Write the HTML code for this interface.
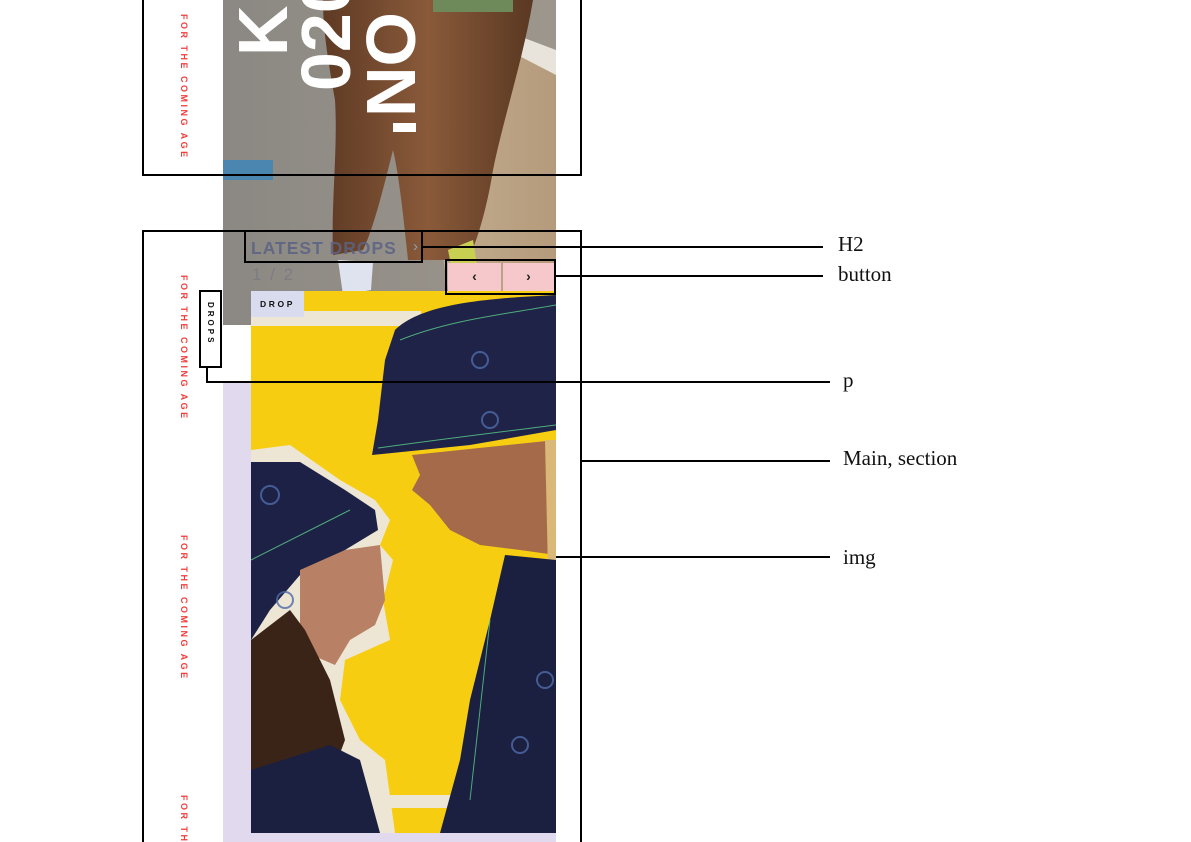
<!DOCTYPE html>
<html style="width:1191px;height:842px;overflow:hidden"><head><meta charset="utf-8"><style>
*{margin:0;padding:0;box-sizing:border-box}
body{width:1191px;height:842px;background:#fff;position:relative;overflow:hidden;font-family:"Liberation Sans",sans-serif}
#w{position:absolute;left:0;top:0;width:1191px;height:842px;overflow:hidden}
.a{position:absolute}
.red{position:absolute;left:179px;width:10px;writing-mode:vertical-rl;color:#f23b3b;font-weight:bold;font-size:9px;letter-spacing:2.5px;white-space:nowrap;line-height:10px}
.big{position:absolute;transform:rotate(-90deg);transform-origin:0 0;color:#fff;font-weight:bold;font-size:70px;line-height:70px;white-space:nowrap}
.lbl{position:absolute;font-family:"Liberation Serif",serif;font-size:21px;color:#111;line-height:1}
.ln{position:absolute;background:#000;height:2px}
.bx{position:absolute;border:2px solid #000}
</style></head><body><div id="w">

<svg class="a" style="left:223px;top:0" width="333" height="325" viewBox="0 0 333 325">
<defs>
<linearGradient id="pv" x1="0" x2="1"><stop offset="0" stop-color="#8b8883"/><stop offset="1" stop-color="#9d968c"/></linearGradient>
<linearGradient id="tl" x1="0" x2="1"><stop offset="0" stop-color="#c3ad90"/><stop offset="1" stop-color="#b59b7c"/></linearGradient>
<linearGradient id="lg" x1="0" x2="1"><stop offset="0" stop-color="#5e3a24"/><stop offset=".5" stop-color="#8a5a3a"/><stop offset="1" stop-color="#5a3822"/></linearGradient>
</defs>
<rect width="333" height="325" fill="url(#pv)"/>
<polygon points="240,30 333,60 333,325 230,325 200,120" fill="url(#tl)"/>
<polygon points="280,30 333,50 333,75 275,45" fill="#e8e4dc"/>
<polygon points="0,160 50,160 50,180 0,180" fill="#4a86b0"/>
<path d="M100,0 L310,0 C300,60 280,120 270,170 C262,220 250,250 245,260 L185,260 C180,210 175,170 170,150 C160,190 150,230 140,250 L110,255 C108,200 115,150 112,100 C105,60 100,30 100,0Z" fill="url(#lg)"/>
<path d="M115,260 L150,262 L148,290 L120,295Z" fill="#dfe3ef"/>
<path d="M225,250 L250,240 L258,290 L235,300Z" fill="#c7d050"/>
<rect x="210" y="0" width="80" height="12" fill="#6f8a5a"/>
</svg>
<div class="a" style="left:223px;top:325px;width:28px;height:58px;background:#fff"></div>
<div class="a" style="left:223px;top:383px;width:28px;height:459px;background:#e1d9ed"></div>
<div class="a" style="left:251px;top:833px;width:305px;height:9px;background:#e1d9ed"></div>

<div class="big" style="left:356px;top:117px">NO</div>
<div class="a" style="left:393px;top:123px;width:23px;height:9px;background:#fff"></div>
<div class="big" style="left:291px;top:91px">020</div>
<div class="big" style="left:228px;top:56px">K</div>

<svg class="a" style="left:251px;top:291px" width="305" height="542" viewBox="251 291 305 542">
<rect x="251" y="291" width="305" height="542" fill="#f7cd12"/>
<rect x="251" y="311" width="170" height="15" fill="#ede6d4"/>
<rect x="251" y="795" width="200" height="13" fill="#ede6d4"/>
<path d="M251,450 L290,445 L340,480 L375,500 L390,520 L380,545 L393,560 L383,600 L390,640 L345,660 L340,700 L360,740 L385,760 L395,833 L251,833Z" fill="#ede6d4"/>
<path d="M251,462 L300,462 L345,490 L375,510 L378,530 L345,550 L300,575 L270,610 L251,640Z" fill="#1d2146"/>
<path d="M300,570 L345,550 L380,545 L385,600 L375,625 L350,640 L335,665 L300,650Z" fill="#b88064"/>
<path d="M251,640 L290,610 L305,630 L330,680 L345,740 L330,780 L251,790Z" fill="#3a2418"/>
<path d="M251,770 L330,745 L360,760 L380,833 L251,833Z" fill="#1b1f40"/>
<path d="M395,330 C420,305 480,300 520,297 L556,295 L556,430 L470,445 L372,455 L378,420 L385,360Z" fill="#1f2348"/>
<path d="M412,455 L556,440 L556,555 L520,550 L480,545 L450,530 L430,505 L412,490 L420,475Z" fill="#a46a4a"/>
<path d="M545,440 L556,440 L556,580 L548,570Z" fill="#d9b878"/>
<path d="M505,555 L556,560 L556,833 L440,833 L460,760 L470,700 L490,620Z" fill="#1b1f40"/>
<g fill="none" stroke="#4f6aa8" stroke-width="2" opacity=".8"><circle cx="480" cy="360" r="8"/><circle cx="490" cy="420" r="8"/><circle cx="270" cy="495" r="9"/><circle cx="285" cy="600" r="8"/><circle cx="545" cy="680" r="8"/><circle cx="520" cy="745" r="8"/></g>
<g fill="none" stroke="#5bd08a" stroke-width="1" opacity=".8"><path d="M400,340 C450,320 500,315 556,305"/><path d="M378,448 C450,438 500,432 556,425"/><path d="M251,560 L350,510"/><path d="M490,620 L470,800"/></g>
</svg>

<div class="a" style="left:251px;top:238px;font-weight:bold;font-size:17.5px;letter-spacing:1px;color:#5b6384;opacity:.85">LATEST DROPS</div>
<div class="a" style="left:413px;top:238px;font-size:15px;color:#8aa0bd">›</div>
<div class="a" style="left:252px;top:265px;font-size:17px;color:#6d7080;opacity:.5;letter-spacing:2px">1 / 2</div>
<div class="a" style="left:448px;top:263px;width:53px;height:28px;background:#f6c8cb;text-align:center;line-height:27px;font-size:14px;font-weight:bold;color:#222">‹</div>
<div class="a" style="left:503px;top:263px;width:51px;height:28px;background:#f6c8cb;text-align:center;line-height:27px;font-size:14px;font-weight:bold;color:#222">›</div>
<div class="a" style="left:251px;top:291px;width:53px;height:26px;background:#d9dcef;font-weight:bold;font-size:8.5px;letter-spacing:2.6px;line-height:26px;padding-left:9px;color:#111">DROP</div>

<div class="red" style="top:14px">FOR THE COMING AGE</div>
<div class="red" style="top:275px">FOR THE COMING AGE</div>
<div class="red" style="top:535px">FOR THE COMING AGE</div>
<div class="red" style="top:795px">FOR THE COMING AGE</div>

<div class="bx" style="left:199px;top:290px;width:23px;height:78px;background:#fff"></div>
<div class="a" style="left:205px;top:302px;writing-mode:vertical-rl;font-weight:bold;font-size:8px;letter-spacing:3px;line-height:10px;color:#111">DROPS</div>

<div class="bx" style="left:142px;top:-10px;width:440px;height:186px"></div>
<div class="bx" style="left:142px;top:230px;width:440px;height:630px"></div>
<div class="bx" style="left:244px;top:230px;width:179px;height:33px"></div>
<div class="bx" style="left:445px;top:259px;width:111px;height:36px"></div>

<div class="ln" style="left:422px;top:246px;width:401px"></div>
<div class="ln" style="left:555px;top:275px;width:268px"></div>
<div class="a" style="left:206px;top:367px;width:2px;height:16px;background:#000"></div>
<div class="ln" style="left:206px;top:381px;width:624px"></div>
<div class="ln" style="left:581px;top:460px;width:249px"></div>
<div class="ln" style="left:556px;top:556px;width:274px"></div>

<div class="lbl" style="left:838px;top:234px">H2</div>
<div class="lbl" style="left:838px;top:264px">button</div>
<div class="lbl" style="left:843px;top:370px">p</div>
<div class="lbl" style="left:843px;top:448px">Main, section</div>
<div class="lbl" style="left:843px;top:547px">img</div>
</div></body></html>
